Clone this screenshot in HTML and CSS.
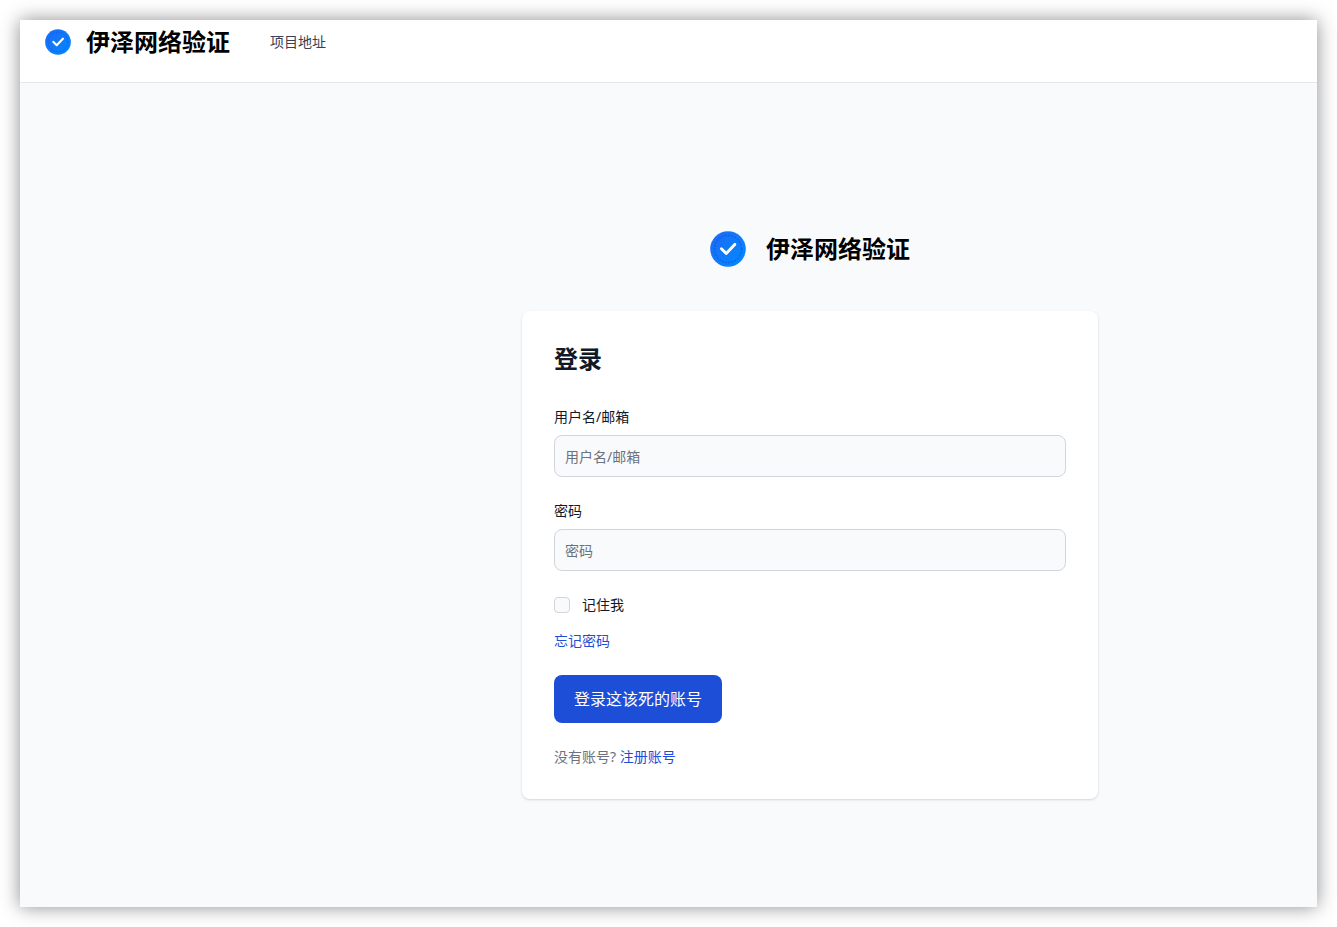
FILE: index.html
```html
<!DOCTYPE html>
<html lang="zh-CN">
<head>
<meta charset="utf-8">
<meta name="viewport" content="width=device-width, initial-scale=1">
<title>伊泽网络验证</title>
<link rel="stylesheet" href="styles.css">
</head>
<body>
<svg class="defs" aria-hidden="true">
  <defs>
    <linearGradient id="logo-fill" x1="0" y1="0" x2="1" y2="1">
      <stop offset="0" stop-color="#1f68f5"/>
      <stop offset="1" stop-color="#008cff"/>
    </linearGradient>
    <symbol id="logo" viewBox="0 0 36 36">
      <circle cx="18" cy="18" r="17.8" fill="url(#logo-fill)"/>
      <circle cx="18" cy="18" r="13.6" fill="none" stroke="#1556e8" stroke-width="1.3" stroke-dasharray="1.6 1.6"/>
      <path d="M11.4 17.8 16.2 22.4 24.8 13.4" fill="none" stroke="#fff" stroke-width="2.9" stroke-linecap="round" stroke-linejoin="round"/>
    </symbol>
  </defs>
</svg>
<div class="window">
  <header class="topbar">
    <a class="brand" href="#"><svg class="brand-logo"><use href="#logo"/></svg><span>伊泽网络验证</span></a>
    <nav><a class="nav-link" href="#">项目地址</a></nav>
  </header>
  <main class="content">
    <a class="brand brand-large" href="#"><svg class="brand-logo"><use href="#logo"/></svg><span>伊泽网络验证</span></a>
    <section class="card">
      <h1 class="title">登录</h1>
      <form class="form">
        <div class="field">
          <label for="user">用户名/邮箱</label>
          <input class="input" id="user" type="text" placeholder="用户名/邮箱">
        </div>
        <div class="field">
          <label for="password">密码</label>
          <input class="input" id="password" type="password" placeholder="密码">
        </div>
        <div class="options">
          <div class="remember">
            <input class="checkbox" id="remember" type="checkbox">
            <label for="remember">记住我</label>
          </div>
          <a class="link" href="#">忘记密码</a>
        </div>
        <button class="submit" type="submit">登录这该死的账号</button>
        <p class="signup">没有账号? <a class="link" href="#">注册账号</a></p>
      </form>
    </section>
  </main>
</div>
</body>
</html>
```
FILE: styles.css
```css
* {
  box-sizing: border-box;
}

body {
  margin: 0;
  padding: 20px;
  min-height: 100vh;
  display: flex;
  background: #fff;
  color: #111827;
  font-family: "Noto Sans", "Noto Sans CJK SC", sans-serif;
  font-size: 14px;
  line-height: 20px;
}

a {
  text-decoration: none;
}

.defs {
  position: absolute;
  width: 0;
  height: 0;
}

.window {
  flex: 1;
  display: flex;
  flex-direction: column;
  background: #f9fafb;
  box-shadow: 0 0 18px rgba(0, 0, 0, 0.45);
}

.topbar {
  display: flex;
  align-items: flex-start;
  gap: 40px;
  padding: 6px 24px 24px;
  background: #fff;
  border-bottom: 1px solid #e5e7eb;
}

.brand {
  display: flex;
  align-items: center;
  gap: 14px;
  color: #000;
  font-size: 24px;
  font-weight: 700;
  line-height: 32px;
}

.brand-logo {
  width: 28px;
  height: 26px;
}

.brand-large {
  gap: 20px;
}

.brand-large .brand-logo {
  width: 36px;
  height: 36px;
}

.nav-link {
  display: block;
  padding: 6px 0;
  color: #374151;
}

.content {
  flex: 1;
  display: flex;
  flex-direction: column;
  align-items: center;
  gap: 44px;
  padding: 148px 0 80px 283px;
  background: #f9fafb;
}

.card {
  width: 100%;
  max-width: 576px;
  padding: 32px;
  background: #fff;
  border-radius: 8px;
  box-shadow: 0 1px 3px rgba(0, 0, 0, 0.1), 0 1px 2px rgba(0, 0, 0, 0.06);
}

.title {
  margin: 0 0 32px;
  font-size: 24px;
  line-height: 32px;
}

.form {
  display: flex;
  flex-direction: column;
  align-items: flex-start;
  gap: 24px;
}

.field {
  width: 100%;
  display: flex;
  flex-direction: column;
  gap: 8px;
}

.input {
  width: 100%;
  height: 42px;
  padding: 0 10px;
  border: 1px solid #d1d5db;
  border-radius: 8px;
  background: #f9fafb;
  color: #111827;
  font: inherit;
}

.input::placeholder {
  color: #6b7280;
}

.options {
  display: flex;
  flex-direction: column;
  gap: 16px;
}

.remember {
  display: flex;
  align-items: center;
  gap: 12px;
}

.checkbox {
  appearance: none;
  width: 16px;
  height: 16px;
  margin: 0;
  border: 1px solid #d1d5db;
  border-radius: 4px;
  background: #f9fafb;
}

.checkbox:checked {
  border-color: #1d4ed8;
  background: #1d4ed8;
}

.link {
  color: #1d4ed8;
}

.submit {
  padding: 12px 20px;
  border: 0;
  border-radius: 8px;
  background: #1d4ed8;
  color: #fff;
  font: inherit;
  font-size: 16px;
  line-height: 24px;
}

.signup {
  margin: 0;
  color: #6b7280;
}
```
